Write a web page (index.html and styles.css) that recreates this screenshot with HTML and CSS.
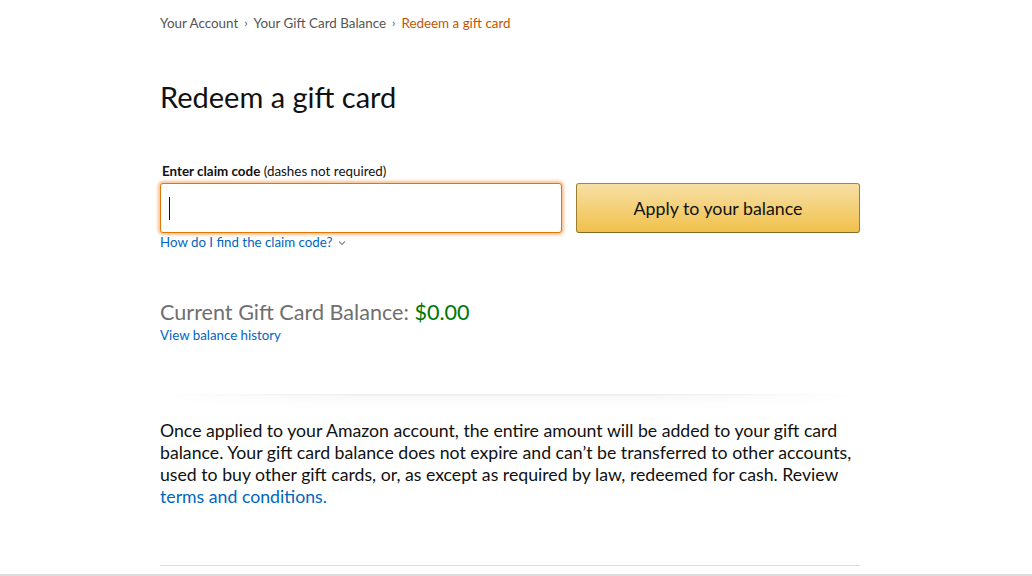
FILE: index.html
```html
<!DOCTYPE html>
<html lang="en">
<head>
<meta charset="utf-8">
<title>Redeem a gift card</title>
<link rel="stylesheet" href="styles.css">
</head>
<body>
<div class="page">
  <nav class="crumbs">
    <a class="crumb" href="#">Your Account</a>
    <span class="sep">›</span>
    <a class="crumb" href="#">Your Gift Card Balance</a>
    <span class="sep">›</span>
    <span class="crumb current">Redeem a gift card</span>
  </nav>

  <h1 class="title">Redeem a gift card</h1>

  <div class="redeem">
    <label class="label"><b>Enter claim code</b> (dashes not required)</label>
    <div class="row">
      <div class="field">
        <div class="input"><span class="caret"></span></div>
        <a class="help" href="#">How do I find the claim code?
          <svg class="chev" width="8" height="6" viewBox="0 0 8 6"><path d="M1 1.5 L4 4.5 L7 1.5" fill="none" stroke="#8a8a8a" stroke-width="1.1"/></svg>
        </a>
      </div>
      <button class="apply">Apply to your balance</button>
    </div>
  </div>

  <div class="balance">
    <div class="bal-line">Current Gift Card Balance: <span class="amount">$0.00</span></div>
    <a class="history" href="#">View balance history</a>
  </div>

  <div class="divider"></div>

  <p class="terms">Once applied to your Amazon account, the entire amount will be added to your gift card balance. Your gift card balance does not expire and can’t be transferred to other accounts, used to buy other gift cards, or, as except as required by law, redeemed for cash. Review <a href="#">terms and conditions.</a></p>

  <div class="endline"></div>
</div>
<div class="footer-line"></div>
</body>
</html>
```

FILE: styles.css
```css
html, body {
  margin: 0;
  padding: 0;
  background: #fff;
}
body {
  font-family: Lato, "Noto Sans", "Liberation Sans", sans-serif;
  color: #111;
  height: 576px;
  overflow: hidden;
  display: flex;
  flex-direction: column;
}
a { text-decoration: none; color: #0066c0; }

.page {
  width: 700px;
  margin-left: 160px;
  padding-top: 14px;
  display: flex;
  flex-direction: column;
  flex: 1;
}

.crumbs {
  font-size: 13.4px;
  line-height: 18px;
  color: #555;
  display: flex;
  gap: 6px;
}
.crumb { color: #555; }
.crumb.current { color: #c45500; }
.sep { color: #555; font-size: 12px; }

.title {
  margin: 47px 0 0;
  font-size: 29px;
  font-weight: 400;
  line-height: 36px;
  color: #111;
}

.redeem { margin-top: 47px; }
.label {
  display: block;
  font-size: 13.4px;
  line-height: 18px;
  color: #111;
  padding-left: 2px;
}
.label b { font-weight: 700; }
.row {
  display: flex;
  gap: 14px;
  margin-top: 3px;
}
.field { width: 402px; display: flex; flex-direction: column; }
.input {
  box-sizing: border-box;
  height: 50px;
  border: 1px solid #e77600;
  border-radius: 3px;
  box-shadow: 0 0 3px 2px rgba(228, 121, 17, 0.45);
  display: flex;
  align-items: center;
  padding-left: 8px;
  background: #fff;
}
.caret {
  width: 1px;
  height: 23px;
  background: #111;
}
.help {
  font-size: 13.3px;
  line-height: 18px;
  margin-top: 0;
  display: flex;
  align-items: center;
  gap: 6px;
}
.chev { margin-top: 1px; }

.apply {
  box-sizing: border-box;
  width: 284px;
  height: 50px;
  border: 1px solid;
  border-color: #a88734 #9c7e31 #846a29;
  border-radius: 3px;
  background: linear-gradient(to bottom, #f7dfa5, #f0c14b);
  font-family: inherit;
  font-size: 17.8px;
  color: #111;
  cursor: pointer;
}

.balance { margin-top: 48px; }
.bal-line {
  font-size: 21.6px;
  line-height: 26px;
  color: #6f6f6f;
}
.amount { color: #007600; }
.history {
  display: block;
  margin-top: 1px;
  font-size: 13.3px;
  line-height: 18px;
}

.divider {
  margin-top: 50px;
  height: 16px;
  background: linear-gradient(to bottom, rgba(0,0,0,0.09) 0, rgba(0,0,0,0.03) 2px, rgba(0,0,0,0.012) 8px, rgba(0,0,0,0) 16px);
  -webkit-mask-image: linear-gradient(to right, transparent 0, #000 30%, #000 70%, transparent 100%);
  mask-image: linear-gradient(to right, transparent 0, #000 30%, #000 70%, transparent 100%);
}

.terms {
  margin: 10px 0 0;
  font-size: 17.7px;
  line-height: 22px;
  color: #111;
}

.endline {
  margin-top: auto;
  margin-bottom: 8px;
  height: 1px;
  background: #ddd;
}
.footer-line {
  height: 2px;
  background: #ddd;
}
```
